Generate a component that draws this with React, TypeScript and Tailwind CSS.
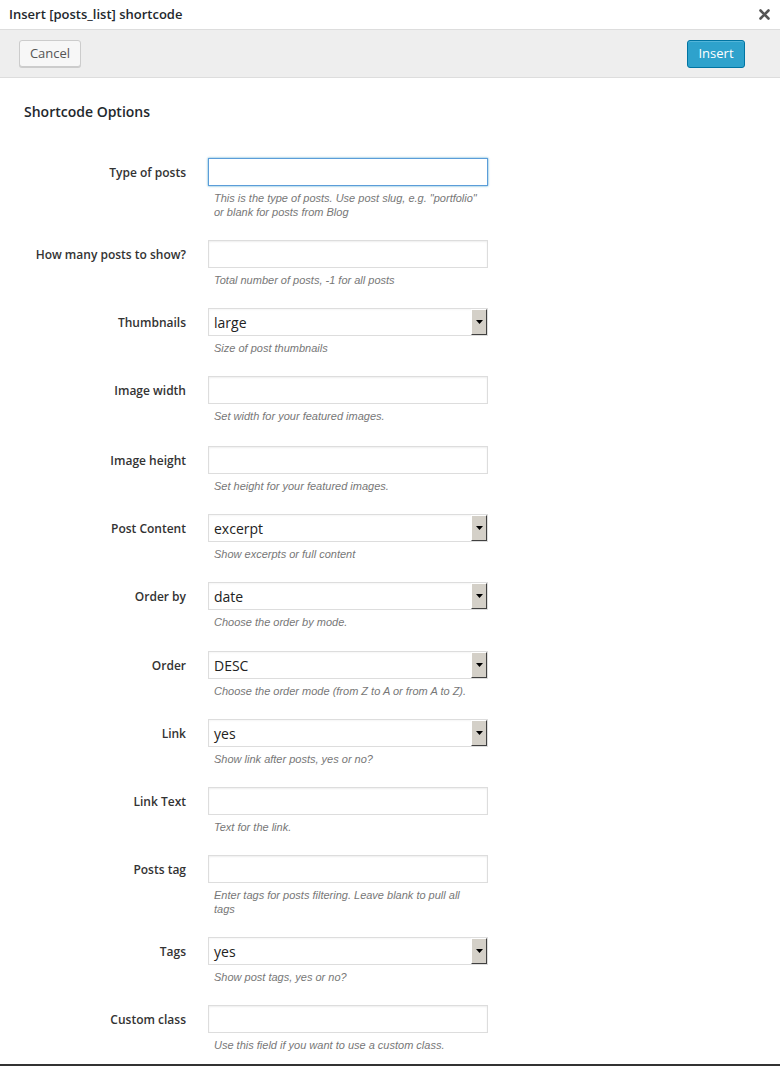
import React from "react";

type Field = {
  label: string;
  kind: "text" | "select";
  value?: string;
  help: string;
  focused?: boolean;
  gap?: string;
};

const FIELDS: Field[] = [
  { label: "Type of posts", kind: "text", focused: true, help: 'This is the type of posts. Use post slug, e.g. "portfolio" or blank for posts from Blog' },
  { label: "How many posts to show?", kind: "text", help: "Total number of posts, -1 for all posts" },
  { label: "Thumbnails", kind: "select", value: "large", help: "Size of post thumbnails" },
  { label: "Image width", kind: "text", help: "Set width for your featured images.", gap: "mb-[23px]" },
  { label: "Image height", kind: "text", help: "Set height for your featured images." },
  { label: "Post Content", kind: "select", value: "excerpt", help: "Show excerpts or full content" },
  { label: "Order by", kind: "select", value: "date", help: "Choose the order by mode.", gap: "mb-[22px]" },
  { label: "Order", kind: "select", value: "DESC", help: "Choose the order mode (from Z to A or from A to Z)." },
  { label: "Link", kind: "select", value: "yes", help: "Show link after posts, yes or no?" },
  { label: "Link Text", kind: "text", help: "Text for the link." },
  { label: "Posts tag", kind: "text", help: "Enter tags for posts filtering. Leave blank to pull all tags" },
  { label: "Tags", kind: "select", value: "yes", help: "Show post tags, yes or no?" },
  { label: "Custom class", kind: "text", help: "Use this field if you want to use a custom class." },
];

const SelectBox = ({ value }: { value: string }) => (
  <div className="h-[28px] w-[280px] border border-[#dddddd] bg-white flex items-center justify-between shadow-[inset_0_1px_2px_rgba(0,0,0,0.04)]">
    <span className="pl-[5px] text-[14px] text-[#222]">{value}</span>
    {/* old-school windows arrow button */}
    <div className="h-[26px] w-[16px] bg-[#d4d0c8] border-t border-l border-t-white border-l-white border-b border-r border-b-[#404040] border-r-[#404040] flex items-center justify-center">
      <svg width="7" height="4" viewBox="0 0 7 4">
        <path d="M0 0h7L3.5 4z" fill="#000" />
      </svg>
    </div>
  </div>
);

const Row = ({ field }: { field: Field }) => (
  <div className={"grid grid-cols-[186px_280px] gap-x-[22px] " + (field.gap ?? "mb-[21px]")}>
    <div className="h-[28px] pt-[1px] flex items-center justify-end text-[12px] font-semibold text-[#333]">{field.label}</div>
    <div>
      {field.kind === "select" ? (
        <SelectBox value={field.value ?? ""} />
      ) : (
        <div
          className={
            field.focused
              ? "h-[28px] w-[280px] bg-white border border-[#5b9dd9] shadow-[0_0_2px_rgba(30,140,190,0.8)]"
              : "h-[28px] w-[280px] bg-white border border-[#dddddd] shadow-[inset_0_1px_2px_rgba(0,0,0,0.07)]"
          }
        />
      )}
      <p className="mt-[5px] pl-[6px] pr-[6px] text-[11px] leading-[14px] italic text-[#777] font-['Liberation_Sans',Arial,sans-serif]">
        {field.help}
      </p>
    </div>
  </div>
);

const App = () => {
  return (
    <div className="w-[780px] h-[1066px] bg-white flex flex-col font-['Open_Sans',sans-serif] text-[#333] overflow-hidden">
      {/* title bar */}
      <div className="h-[30px] shrink-0 flex items-center justify-between pl-[9px] pr-[10px] border-b border-[#dddddd]">
        <span className="text-[13px] font-semibold text-[#23282d]">Insert [posts_list] shortcode</span>
        <svg width="11" height="11" viewBox="0 0 11 11">
          <path d="M1.5 1.5l8 8M9.5 1.5l-8 8" stroke="#555" strokeWidth="2.6" strokeLinecap="round" />
        </svg>
      </div>

      {/* toolbar */}
      <div className="h-[48px] shrink-0 bg-[#eeeeee] border-b border-[#dddddd] flex items-center justify-between pl-[19px] pr-[35px]">
        <button className="h-[27px] w-[62px] rounded-[3px] border border-[#cccccc] bg-[#f7f7f7] text-[13px] text-[#555] shadow-[0_1px_0_#ccc]">
          Cancel
        </button>
        <button className="h-[28px] w-[58px] rounded-[3px] border border-[#0074a2] bg-[#2ea2cc] text-[13px] text-white shadow-[inset_0_1px_0_rgba(120,200,230,0.5)]">
          Insert
        </button>
      </div>

      {/* options */}
      <div className="flex-1 min-h-0 overflow-hidden pt-[24px]">
        <h2 className="pl-[24px] text-[14px] font-semibold text-[#23282d] leading-[20px]">Shortcode Options</h2>
        <div className="mt-[36px]">
          {FIELDS.map((f) => (
            <Row key={f.label} field={f} />
          ))}
        </div>
      </div>

      <div className="h-[2px] shrink-0 bg-[#333333]" />
    </div>
  );
};

export default App;
